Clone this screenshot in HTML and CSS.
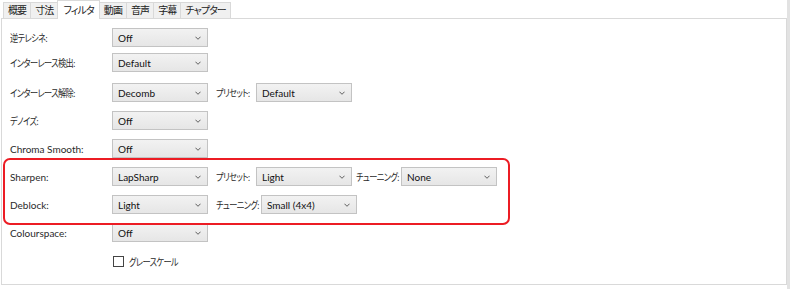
FILE: index.html
```html
<!DOCTYPE html>
<html lang="ja">
<head>
    <meta charset="UTF-8" />
    <title>フィルタ</title>
    <link rel="stylesheet" href="styles.css">
</head>
<body>
    <div class="window">
        <div class="tabs">
            <div class="tab">概要</div>
            <div class="tab">寸法</div>
            <div class="tab active">フィルタ</div>
            <div class="tab">動画</div>
            <div class="tab">音声</div>
            <div class="tab">字幕</div>
            <div class="tab">チャプター</div>
        </div>

        <div class="panel">
            <div class="row">
                <span class="label ja">逆テレシネ:</span>
                <div class="select">Off<svg viewBox="0 0 7 4"><path d="M0.5 0.5 L3.5 3.5 L6.5 0.5"/></svg></div>
            </div>
            <div class="row row-tight">
                <span class="label ja">インターレース検出:</span>
                <div class="select">Default<svg viewBox="0 0 7 4"><path d="M0.5 0.5 L3.5 3.5 L6.5 0.5"/></svg></div>
            </div>
            <div class="row row-wide">
                <span class="label ja">インターレース解除:</span>
                <div class="select">Decomb<svg viewBox="0 0 7 4"><path d="M0.5 0.5 L3.5 3.5 L6.5 0.5"/></svg></div>
                <span class="sub-label ja preset">プリセット:</span>
                <div class="select">Default<svg viewBox="0 0 7 4"><path d="M0.5 0.5 L3.5 3.5 L6.5 0.5"/></svg></div>
            </div>
            <div class="row">
                <span class="label ja">デノイズ:</span>
                <div class="select">Off<svg viewBox="0 0 7 4"><path d="M0.5 0.5 L3.5 3.5 L6.5 0.5"/></svg></div>
            </div>
            <div class="row">
                <span class="label">Chroma Smooth:</span>
                <div class="select">Off<svg viewBox="0 0 7 4"><path d="M0.5 0.5 L3.5 3.5 L6.5 0.5"/></svg></div>
            </div>
            <div class="row">
                <span class="label">Sharpen:</span>
                <div class="select">LapSharp<svg viewBox="0 0 7 4"><path d="M0.5 0.5 L3.5 3.5 L6.5 0.5"/></svg></div>
                <span class="sub-label ja preset">プリセット:</span>
                <div class="select">Light<svg viewBox="0 0 7 4"><path d="M0.5 0.5 L3.5 3.5 L6.5 0.5"/></svg></div>
                <span class="sub-label ja tune tune-close">チューニング:</span>
                <div class="select">None<svg viewBox="0 0 7 4"><path d="M0.5 0.5 L3.5 3.5 L6.5 0.5"/></svg></div>
            </div>
            <div class="row">
                <span class="label">Deblock:</span>
                <div class="select">Light<svg viewBox="0 0 7 4"><path d="M0.5 0.5 L3.5 3.5 L6.5 0.5"/></svg></div>
                <span class="sub-label ja tune">チューニング:</span>
                <div class="select">Small (4x4)<svg viewBox="0 0 7 4"><path d="M0.5 0.5 L3.5 3.5 L6.5 0.5"/></svg></div>
            </div>
            <div class="row">
                <span class="label">Colourspace:</span>
                <div class="select">Off<svg viewBox="0 0 7 4"><path d="M0.5 0.5 L3.5 3.5 L6.5 0.5"/></svg></div>
            </div>
            <div class="row row-check">
                <span class="label"></span>
                <span class="checkbox"></span>
                <span class="check-label ja">グレースケール</span>
            </div>

            <div class="highlight"></div>
        </div>
    </div>
</body>
</html>
```

FILE: styles.css
```css
body {
    margin: 0;
    background-color: #fff;
    font-family: Lato, "Noto Sans CJK JP", sans-serif;
    font-size: 10px;
    font-feature-settings: "palt";
    color: #2a2a2a;
}

/* Japanese labels are drawn narrower, like Meiryo UI */
.ja {
    font-size: 10px;
    letter-spacing: -0.7px;
    white-space: nowrap;
    transform: scaleX(0.82);
    transform-origin: left center;
}

.window {
    width: 790px;
    height: 289px;
    padding-left: 1px;
    box-sizing: border-box;
    border-right: 3px solid #e2e2e2;
}

.tabs {
    display: flex;
    align-items: flex-end;
    height: 18px;
    padding-left: 2px;
}

.tab {
    height: 15px;
    line-height: 15px;
    padding: 0 4px;
    background-color: #f0f0f0;
    border: 1px solid #d9d9d9;
    border-bottom: none;
    margin-right: -1px;
    color: #222;
    font-size: 10px;
    letter-spacing: -0.9px;
}

.tab.active {
    height: 18px;
    line-height: 18px;
    padding: 0 5px;
    background-color: #fff;
    position: relative;
    z-index: 1;
    margin-bottom: -1px;
}

.panel {
    position: relative;
    height: 267px;
    box-sizing: border-box;
    border: 1px solid #d9d9d9;
    padding: 9px 0 0 8px;
    display: flex;
    flex-direction: column;
    gap: 9px;
}

.row {
    display: flex;
    align-items: center;
    height: 19px;
}

.row-tight {
    margin-top: -3px;
}

.row-wide {
    margin-top: 2px;
}

.row-check {
    margin-top: 1px;
}

.label {
    width: 102px;
    flex-shrink: 0;
}

.sub-label {
    margin-left: 8px;
    flex-shrink: 0;
}

.preset {
    width: 40px;
}

.tune {
    width: 45px;
}

.tune-close {
    margin-left: 4px;
}

.select {
    width: 96px;
    height: 19px;
    flex-shrink: 0;
    box-sizing: border-box;
    border: 1px solid #c3c3c3;
    background: linear-gradient(#f2f2f2, #e6e6e6);
    display: flex;
    align-items: center;
    justify-content: space-between;
    padding: 0 6px 0 5px;
    color: #111;
}

.select svg {
    width: 6px;
    height: 4px;
    fill: none;
    stroke: #555;
    stroke-width: 1.1;
}

.checkbox {
    width: 11px;
    height: 11px;
    box-sizing: border-box;
    border: 1px solid #444;
    background-color: #fff;
    margin-left: 1px;
}

.check-label {
    margin-left: 5px;
}

.highlight {
    position: absolute;
    left: 1px;
    top: 139px;
    width: 507px;
    height: 67px;
    box-sizing: border-box;
    border: 2px solid #ec1c24;
    border-radius: 7px;
}
```
